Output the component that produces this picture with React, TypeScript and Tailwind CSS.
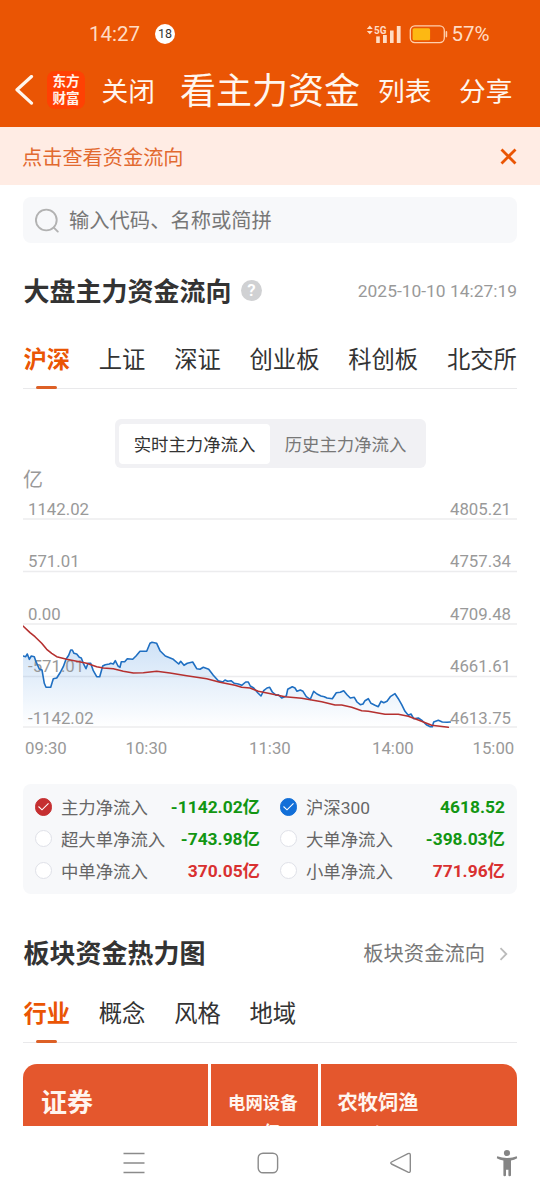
import clsx from "clsx"

const marketTabs = ["沪深", "上证", "深证", "创业板", "科创板", "北交所"]
const plateTabs = ["行业", "概念", "风格", "地域"]

const gridRows = [
  { y: 519, textY: 515, left: "1142.02", right: "4805.21" },
  { y: 571.5, textY: 567.3, left: "571.01", right: "4757.34" },
  { y: 624, textY: 619.6, left: "0.00", right: "4709.48" },
  { y: 676.5, textY: 671.5, left: "-571.01", right: "4661.61" },
  { y: 727, textY: 724, left: "-1142.02", right: "4613.75" },
]

const times = [
  { x: 25, label: "09:30" },
  { x: 125.5, label: "10:30" },
  { x: 249, label: "11:30" },
  { x: 372, label: "14:00" },
  { x: 472.5, label: "15:00" },
]

const indexLine =
  "23,656 25.7,656.7 27.3,654 29.3,659.3 31.3,656 34.3,656.7 36,661.7 39.3,669 42,670 44.3,683.3 46,687.3 50.7,687.3 53.3,678.7 56.7,678 60.7,671.7 63.3,666.7 66,659.3 68.7,655.3 70.7,650 72.3,650 74,653.3 76.7,654 79.3,657.3 81.3,658 83.3,663.3 86,668.7 88,663.3 90.7,663.3 93.3,670.7 96.7,676.7 99.7,676.7 102.7,666 105.3,664.7 109.3,664 110.7,663.3 113.3,664 115.3,660.7 118,666 120,667.3 121.3,661.7 124.7,661.7 127.3,658.7 132.7,659.3 136,656 140,651.3 146.7,651.3 150,643.3 152,642.3 156.7,643.3 160,650.7 165.3,656 173.3,659.3 178.7,664 180.7,661.3 184,665.3 187.3,663.3 192.7,662 196.7,668.7 200,669.3 203.3,667.3 208.7,669.3 213.3,675.3 218.3,680.7 222.7,682 225,680 227.7,681.3 231,680.7 234.3,683.3 238.3,684 241.7,685.3 245.7,682 248.3,682 250.3,686 253.7,688 257.7,692.7 261,696 263.7,690.7 267,688 269.7,687.3 272.3,692 276.3,695.3 278.3,694.7 281.7,698 286.3,696 287.7,689.3 292.3,686.7 295,688 297,691.3 300.3,690 303,691.3 306.3,696.7 310.3,699.3 313.7,691.3 317,694 321,696 324.3,696.7 327,698 332.3,698.7 336.3,692.7 340.3,692.3 343.7,690.7 347,694.7 350.3,698 354.3,697.3 357,702 360.3,704.7 363,704 365,700.7 368.3,698.7 371,703.3 375,705.3 378.3,706.7 381,701.3 383.7,702.7 387,701.3 390.3,696.7 395,693.7 398.3,698.7 401.7,704.7 405,711.3 408.3,715.3 411,714 413.7,718.7 418.3,718 422.3,720.7 426.3,724.7 430.3,726.7 432.3,726.7 433.7,722 438.3,720.3 442.3,722 447,722.3 450.3,722"

const mainForceLine =
  "23,626 30,632.7 35,636.7 41.7,643.3 46.7,649.3 51.7,653.3 56.7,656.7 66.7,659.3 76.7,661.3 86.7,663.3 96.7,666.7 103.3,668 113.3,668.7 123.3,671.3 133.3,673 143.3,672.7 156.7,671.3 170,673 186.7,675.7 206.7,678.7 220,682.3 235,685.3 241.7,687.3 250,688 258.3,691.3 268.3,693.3 285,696.7 301.7,698.3 311.7,700 321.7,701.7 335,705 341.7,705 351.7,707.3 361.7,710.7 368.3,711.3 385,714.3 398.3,714.3 408.3,716.3 418.3,720 431.7,725.3 448.3,727.3"

const legend = [
  { name: "主力净流入", value: "-1142.02亿", color: "text-[#129612]", dot: "border-[#c52f31] bg-[#c52f31]", checked: true },
  { name: "沪深300", value: "4618.52", color: "text-[#129612]", dot: "border-[#126fd8] bg-[#126fd8]", checked: true },
  { name: "超大单净流入", value: "-743.98亿", color: "text-[#129612]", dot: "border-[#dfe1e8] bg-white", checked: false },
  { name: "大单净流入", value: "-398.03亿", color: "text-[#129612]", dot: "border-[#dfe1e8] bg-white", checked: false },
  { name: "中单净流入", value: "370.05亿", color: "text-[#d93030]", dot: "border-[#dfe1e8] bg-white", checked: false },
  { name: "小单净流入", value: "771.96亿", color: "text-[#d93030]", dot: "border-[#dfe1e8] bg-white", checked: false },
]

function StatusBar() {
  return (
    <div className="flex h-[69px] items-center text-[20.5px] text-[#ffdcc4]">
      <span className="ml-[89px] w-[66px]">14:27</span>
      <span className="mb-px flex size-5 items-center justify-center rounded-full bg-white text-[12.5px] text-[#333]">18</span>
      <svg className="mb-px ml-[191px]" width="36" height="22" viewBox="0 0 36 22" fill="#ffdcc4">
        <path d="M.8 6 3.8 2.6 6.8 6ZM.8 8 3.8 11.2 6.8 8Z" />
        <text x="8" y="11" fontSize="11.5" fontWeight="700" textLength="12.5" lengthAdjust="spacingAndGlyphs">5G</text>
        <rect x="10.2" y="13.4" width="3.6" height="6.6" />
        <rect x="17" y="12" width="3.8" height="8" />
        <rect x="24" y="7.5" width="3.6" height="12.5" />
        <rect x="30.8" y="3" width="3.8" height="17" />
      </svg>
      <svg className="mb-px ml-[7px]" width="40" height="20" viewBox="0 0 40 20" fill="none">
        <rect x="1.3" y="1.8" width="34" height="16.8" rx="4.5" stroke="#ffd0ae" strokeWidth="1.3" />
        <rect x="3.6" y="4.2" width="17.5" height="12" rx="1.5" fill="#fdb813" />
        <path d="M37.4 7.8v4.8" stroke="#ffd0ae" strokeWidth="1.6" strokeLinecap="round" />
      </svg>
      <span className="ml-[2.5px]">57%</span>
    </div>
  )
}

function NavBar() {
  return (
    <div className="flex h-[44px] items-center text-[26.7px] leading-none whitespace-nowrap text-[#fff6ee]">
      <svg className="ml-[13px]" width="22" height="32" viewBox="0 0 22 32" fill="none" stroke="#fff6ee" strokeWidth="3.2" strokeLinecap="round" strokeLinejoin="round">
        <path d="M18.5 1.5 4 14.8 18.5 28.1" />
      </svg>
      <div className="mb-[2px] ml-[12px] flex size-[38px] flex-col items-center justify-center rounded-[8px] bg-[#ff4103] pb-px text-[13.6px] leading-[16.5px] font-bold text-[#fff3ec]">
        <span>东方</span>
        <span>财富</span>
      </div>
      <span className="ml-[16.5px] w-[78.5px] pt-[2px]">关闭</span>
      <span className="w-[198px] pt-px text-[36px]">看主力资金</span>
      <span className="w-[81px] pt-[2px]">列表</span>
      <span className="pt-[2px]">分享</span>
    </div>
  )
}

function TabRow({ tabs, className }: { tabs: string[]; className?: string }) {
  return (
    <div className={clsx("flex gap-[28.8px] border-b border-[#e9e9eb] pt-px pl-[0.4px] text-[23.3px] leading-[35px] whitespace-nowrap text-[#333]", className)}>
      {tabs.map((tab, i) => (
        <div key={tab} className={clsx("relative shrink-0", i === 0 && "font-bold text-[#ea5504]")}>
          {tab}
          {i === 0 && <i className="absolute -bottom-px left-[12.5px] h-[3px] w-[21px] rounded-full bg-[#dd6026]" />}
        </div>
      ))}
    </div>
  )
}

function FlowChart() {
  return (
    <svg className="mt-[2px] block h-[270px] w-[494px]" viewBox="23 494 494 270" fill="none">
      <defs>
        <linearGradient id="fade" gradientUnits="userSpaceOnUse" x1="0" y1="640" x2="0" y2="727">
          <stop offset="0" stopColor="#1d77d8" stopOpacity="0.22" />
          <stop offset="1" stopColor="#1d77d8" stopOpacity="0" />
        </linearGradient>
      </defs>
      {gridRows.map((row) => (
        <path key={row.y} d={`M23 ${row.y}H517`} stroke="#ececee" strokeWidth="1.3" />
      ))}
      <polygon points={`23,727 ${indexLine} 450.3,727`} fill="url(#fade)" />
      <g fill="#999" fontSize="16.8">
        {gridRows.map((row) => (
          <g key={row.y}>
            <text x="28" y={row.textY}>{row.left}</text>
            <text x="511" y={row.textY} textAnchor="end">{row.right}</text>
          </g>
        ))}
        {times.map((t) => (
          <text key={t.label} x={t.x} y="754">{t.label}</text>
        ))}
      </g>
      <g strokeWidth="1.6" strokeLinejoin="round" strokeLinecap="round">
        <polyline points={indexLine} stroke="#1f6fc2" />
        <polyline points={mainForceLine} stroke="#b5302f" />
      </g>
    </svg>
  )
}

function Legend() {
  return (
    <div className="mt-5 grid h-[110px] grid-cols-[225px_225px] content-start gap-x-[20px] rounded-[8px] bg-[#f7f8fa] px-3 pt-[7px] text-[17.4px]">
      {legend.map((item) => (
        <div key={item.name} className="flex h-[31.8px] items-center whitespace-nowrap">
          <span className={clsx("flex size-[17.4px] items-center justify-center rounded-full border", item.dot)}>
            {item.checked && (
              <svg width="13" height="13" viewBox="0 0 13 13" fill="none" stroke="#fff" strokeWidth="1.1">
                <path d="M1.5 6.5 5 9.8 11.5 3.4" />
              </svg>
            )}
          </span>
          <span className="ml-[8.5px] pt-[3px] text-[#666]">{item.name}</span>
          <span className={clsx("ml-auto pt-px font-bold", item.color)}>{item.value}</span>
        </div>
      ))}
    </div>
  )
}

function HeatMap() {
  return (
    <div className="mt-[21px] flex h-[62px] gap-[2.5px] overflow-hidden rounded-t-[14px] font-bold whitespace-nowrap text-[#fff5ef]">
      <div className="w-[185px] bg-[#e4572d] pt-5 pl-[18px] text-[26px] leading-[38px]">证券</div>
      <div className="w-[107.5px] bg-[#e4572d] pt-[26px] pl-[17.5px] text-[17.4px] leading-[26px]">
        电网设备
        <div className="mt-[3px]">3.41亿</div>
      </div>
      <div className="flex-1 bg-[#e4572d] pt-[23.5px] pl-[17px] text-[20.3px] leading-[30px]">
        农牧饲渔
        <div className="mt-px text-[17.4px]">3.08亿</div>
      </div>
    </div>
  )
}

function SystemNav() {
  return (
    <div className="flex h-[74px] items-center pb-px">
      <svg className="ml-[122px]" width="24" height="24" viewBox="0 0 24 24" stroke="#8b8b8b" strokeWidth="1.5">
        <path d="M1.5 2.5h21M1.5 12h21M1.5 21.5h21" />
      </svg>
      <svg className="ml-[110px]" width="24" height="24" viewBox="0 0 24 24" fill="none" stroke="#8b8b8b" strokeWidth="1.4">
        <rect x="2.2" y="2.2" width="19.4" height="19.6" rx="4.8" />
      </svg>
      <svg className="ml-[109px]" width="24" height="24" viewBox="0 0 24 24" fill="none" stroke="#8b8b8b" strokeWidth="1.4" strokeLinejoin="round">
        <path d="M2.5 11 19 2.6Q21.3 1.8 21.3 4V19.8Q21.3 22 19 21.2L2.5 13Q1 12 2.5 11Z" />
      </svg>
      <svg className="ml-[83px]" width="22" height="28" viewBox="0 0 22 28" fill="#858585">
        <circle cx="11" cy="4" r="3.1" />
        <path d="M1.2 7.2Q11 10.6 20.8 7.2L21.2 9.3Q18 11 15 11.5V26.2Q15 27.2 13.6 27.2Q12.4 27.2 12.4 26.2V20.8H10V26.2Q10 27.2 8.6 27.2Q7.4 27.2 7.4 26.2V11.5Q4 11 .8 9.3Z" />
      </svg>
    </div>
  )
}

export default function App() {
  return (
    <div className="h-[1200px] w-[540px] overflow-hidden bg-white font-[Roboto,'Noto_Sans_CJK_SC',sans-serif]">
      <header className="h-[127px] bg-[#ea5504]">
        <StatusBar />
        <NavBar />
      </header>

      <div className="flex h-[58px] items-center justify-between bg-[#ffece4] pr-[23px] pl-[22px] text-[20.2px] text-[#e2692f]">
        <span className="pt-[4px]">点击查看资金流向</span>
        <svg width="17" height="17" viewBox="0 0 17 17" stroke="#ea5504" strokeWidth="2.8">
          <path d="M1.5 1.5l14 14M15.5 1.5l-14 14" />
        </svg>
      </div>

      <main className="h-[941px] overflow-hidden px-[23px] pt-3">
        <div className="flex h-[46px] items-center rounded-[8px] bg-[#f7f8fa] text-[20.3px] text-[#777]">
          <svg className="ml-3 mr-[10px]" width="24" height="25" viewBox="0 0 24 25" fill="none" stroke="#b2b2b2" strokeWidth="1.9">
            <circle cx="11.3" cy="12" r="10.4" />
            <path d="M18.8 19.6 22.8 23.6" strokeLinecap="round" />
          </svg>
          <span className="pt-[3px]">输入代码、名称或简拼</span>
        </div>

        <div className="mt-[29px] flex h-10 items-center">
          <h2 className="pt-px pl-[0.5px] text-[26px] font-bold text-[#333]">大盘主力资金流向</h2>
          <span className="mb-[4px] ml-[9.5px] flex size-[21px] items-center justify-center rounded-full bg-[#d0d1d3] pt-px text-[17px] font-semibold text-white">?</span>
          <time className="mb-[2px] ml-auto text-[17.4px] text-[#999]">2025-10-10 14:27:19</time>
        </div>

        <TabRow tabs={marketTabs} className="mt-[30px] h-[47px]" />

        <div className="mx-auto mt-[30px] flex h-[49px] w-[311px] rounded-[6px] bg-[#f1f1f4] p-[4.5px] text-[17.4px] leading-[42px]">
          <div className="w-[151px] rounded-[4px] bg-white text-center text-[#333]">实时主力净流入</div>
          <div className="w-[151px] text-center text-[#777]">历史主力净流入</div>
        </div>

        <div className="h-[24px] text-[20px] leading-[24px] text-[#999]">亿</div>
        <FlowChart />
        <Legend />

        <div className="mt-[40px] flex h-10 items-center">
          <h2 className="pt-px pl-[0.5px] text-[26px] font-bold text-[#333]">板块资金热力图</h2>
          <span className="ml-auto text-[20.3px] text-[#777]">板块资金流向</span>
          <svg className="mr-[9px] ml-[14px]" width="9" height="14" viewBox="0 0 9 14" fill="none" stroke="#bbb" strokeWidth="1.8">
            <path d="M1.5 1.2 7.3 7 1.5 12.8" />
          </svg>
        </div>

        <TabRow tabs={plateTabs} className="mt-[22px] h-[47px]" />
        <HeatMap />
      </main>

      <SystemNav />
    </div>
  )
}
